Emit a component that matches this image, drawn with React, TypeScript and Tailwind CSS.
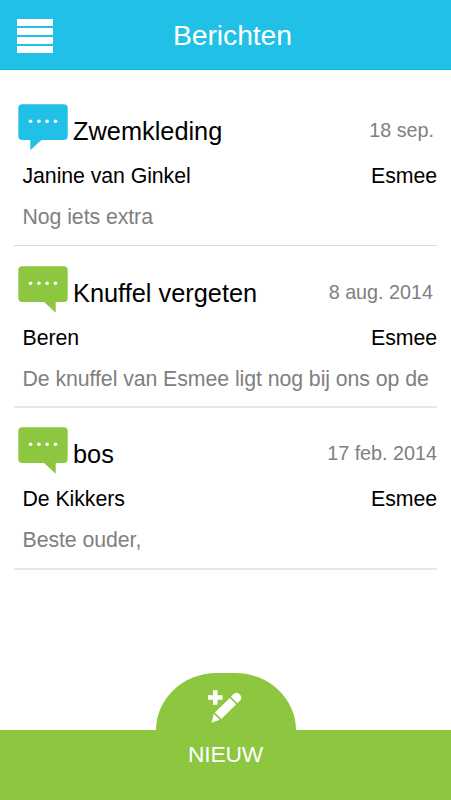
type Message = {
    title: string;
    date: string;
    sender: string;
    child: string;
    preview: string;
    incoming: boolean;
    rowClass: string;
    dateClass: string;
    lineClass: string;
};

const messages: Message[] = [
    {
        title: 'Zwemkleding',
        date: '18 sep.',
        sender: 'Janine van Ginkel',
        child: 'Esmee',
        preview: 'Nog iets extra',
        incoming: true,
        rowClass: 'h-[162px]',
        dateClass: 'pr-[3px]',
        lineClass: 'h-[56px] border-b border-[#dadada]'
    },
    {
        title: 'Knuffel vergeten',
        date: '8 aug. 2014',
        sender: 'Beren',
        child: 'Esmee',
        preview: 'De knuffel van Esmee ligt nog bij ons op de',
        incoming: false,
        rowClass: 'h-[161px]',
        dateClass: 'pr-1',
        lineClass: 'h-[56px] border-b-2 border-[#e6e6e6]'
    },
    {
        title: 'bos',
        date: '17 feb. 2014',
        sender: 'De Kikkers',
        child: 'Esmee',
        preview: 'Beste ouder,',
        incoming: false,
        rowClass: 'h-[162px]',
        dateClass: '',
        lineClass: 'h-[57px] border-b-2 border-[#e6e6e6]'
    }
];

const BubbleIcon = ({ incoming }: { incoming: boolean }) => (
    <svg
        width="50"
        height="47"
        viewBox="0 0 50 47"
        className={incoming ? 'shrink-0 text-[#21c0e6]' : 'shrink-0 text-[#8dc63f]'}
    >
        <rect x="0.3" y="0.3" width="49.4" height="35.7" rx="4" fill="currentColor" />
        <path
            d={incoming ? 'M12.3 35V46.3L24.5 35Z' : 'M37.7 35V46.8L25 35Z'}
            fill="currentColor"
        />
        {[12.6, 20.9, 29.1, 37.4].map((cx) => (
            <circle key={cx} cx={cx} cy="17.2" r="1.8" fill="#fff" />
        ))}
    </svg>
);

const MessageRow = ({ message }: { message: Message }) => (
    <li className={message.rowClass}>
        <div className="flex h-[52px] pl-1">
            <BubbleIcon incoming={message.incoming} />
            <h2 className="pl-[5px] pt-[11px] text-[25.35px] leading-8">
                {message.title}
            </h2>
            <span
                className={`ml-auto pt-3 text-[19.75px] leading-7 text-[#808080] ${message.dateClass}`}
            >
                {message.date}
            </span>
        </div>
        <div className="flex justify-between pl-[8.5px] pt-1.5 text-[21.3px] leading-7 tracking-[-0.07px]">
            <span>{message.sender}</span>
            <span>{message.child}</span>
        </div>
        <p
            className={`whitespace-nowrap pl-[8.5px] pt-[13px] text-[21.3px] leading-7 tracking-[-0.07px] text-[#808080] ${message.lineClass}`}
        >
            {message.preview}
        </p>
    </li>
);

const App = () => {
    return (
        <div className="flex h-[800px] w-[451px] flex-col overflow-hidden bg-white font-['Liberation_Sans',Arial,sans-serif] text-black">
            <header className="grid h-[70px] shrink-0 grid-cols-[1fr_auto_1fr] border-b border-[#0fb8e2] bg-[#21c0e6]">
                <button className="flex flex-col gap-0.5 pl-[17px] pt-[19px]" aria-label="Menu">
                    <span className="h-[7px] w-9 bg-white" />
                    <span className="h-[7px] w-9 bg-white" />
                    <span className="h-[7px] w-9 bg-white" />
                    <span className="h-[7px] w-9 bg-white" />
                </button>
                <h1 className="pl-3.5 pt-[19px] text-[28.4px] leading-8 tracking-[-0.11px] text-white">
                    Berichten
                </h1>
            </header>

            <ul className="flex-1 pl-3.5 pr-3.5 pt-[34px]">
                {messages.map((message) => (
                    <MessageRow key={message.title} message={message} />
                ))}
            </ul>

            <footer className="flex shrink-0 flex-col items-center text-white">
                <div className="flex h-[57px] w-[140px] justify-center rounded-t-[61px_57px] bg-[#8dc63f] pt-4">
                    <svg width="36" height="36" viewBox="0 0 36 36" fill="#fff">
                        <path d="M5 1.300h4.600v5h5v4.500h-5v5H5v-5H0V6.300h5z" />
                        <path d="M21.800 8.900l6.400 6.400-14.900 14.800-6.500-6.500z" />
                        <path d="M22.900 7.800l2.500-2.500a4.600 4.600 0 0 1 6.500 6.500l-2.500 2.500z" />
                        <path d="M5.700 24.700l6 6-8.100 3z" />
                    </svg>
                </div>
                <button className="h-[70px] w-full bg-[#8dc63f] pb-[22px] text-[22.8px] leading-7 tracking-[-0.2px]">
                    NIEUW
                </button>
            </footer>
        </div>
    );
};

export default App;
